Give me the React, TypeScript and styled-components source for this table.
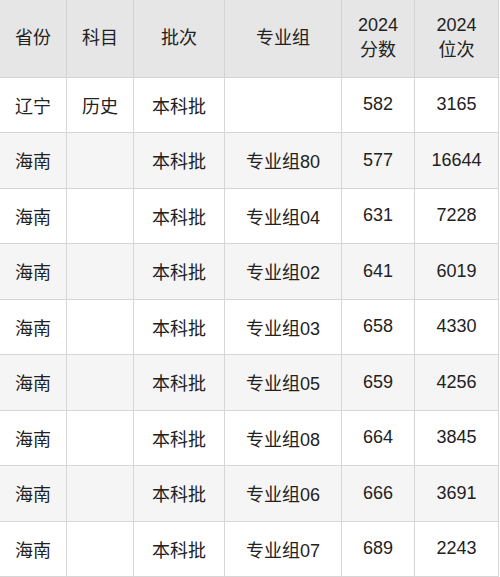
import React from 'react';
import styled, { createGlobalStyle } from 'styled-components';

const GlobalStyle = createGlobalStyle`
  html, body {
    margin: 0;
    padding: 0;
    background: #ffffff;
  }
`;

const rows = [
  { province: '辽宁', subject: '历史', batch: '本科批', group: '', score: '582', rank: '3165' },
  { province: '海南', subject: '', batch: '本科批', group: '专业组80', score: '577', rank: '16644' },
  { province: '海南', subject: '', batch: '本科批', group: '专业组04', score: '631', rank: '7228' },
  { province: '海南', subject: '', batch: '本科批', group: '专业组02', score: '641', rank: '6019' },
  { province: '海南', subject: '', batch: '本科批', group: '专业组03', score: '658', rank: '4330' },
  { province: '海南', subject: '', batch: '本科批', group: '专业组05', score: '659', rank: '4256' },
  { province: '海南', subject: '', batch: '本科批', group: '专业组08', score: '664', rank: '3845' },
  { province: '海南', subject: '', batch: '本科批', group: '专业组06', score: '666', rank: '3691' },
  { province: '海南', subject: '', batch: '本科批', group: '专业组07', score: '689', rank: '2243' },
];

const colWidths = [67, 67, 91, 117, 73, 84];

const App = () => {
  return (
    <>
      <GlobalStyle />
      <Wrapper>
        <Table>
          <colgroup>
            {colWidths.map((w, i) => (
              <col key={i} style={{ width: w }} />
            ))}
          </colgroup>
          <thead>
            <HeadRow>
              <HeadCell>省份</HeadCell>
              <HeadCell>科目</HeadCell>
              <HeadCell>批次</HeadCell>
              <HeadCell>专业组</HeadCell>
              <HeadCell>2024<br />分数</HeadCell>
              <HeadCell>2024<br />位次</HeadCell>
            </HeadRow>
          </thead>
          <tbody>
            {rows.map((r, i) => (
              <BodyRow key={i} $striped={i % 2 === 1}>
                <Cell>{r.province}</Cell>
                <Cell>{r.subject}</Cell>
                <Cell>{r.batch}</Cell>
                <Cell>{r.group}</Cell>
                <Cell>{r.score}</Cell>
                <Cell>{r.rank}</Cell>
              </BodyRow>
            ))}
          </tbody>
        </Table>
      </Wrapper>
    </>
  );
};

const Wrapper = styled.div`
  width: 500px;
  height: 577px;
  overflow: hidden;
`;

const Table = styled.table`
  width: 500px;
  margin-left: -1px;
  border-collapse: collapse;
  table-layout: fixed;
  font-family: "Liberation Sans", "Noto Sans CJK SC", sans-serif;
  font-size: 18px;
  color: #222222;
`;

const HeadRow = styled.tr`
  height: 77px;
  background-color: #e6e6e6;
`;

const HeadCell = styled.th`
  font-weight: 400;
  text-align: center;
  vertical-align: middle;
  line-height: 25px;
  padding: 0;
  border: 1px solid #d3d3d3;
  border-top: none;
`;

const BodyRow = styled.tr<{ $striped: boolean }>`
  height: 55.5px;
  background-color: ${(p) => (p.$striped ? '#f5f5f5' : '#ffffff')};
`;

const Cell = styled.td`
  text-align: center;
  vertical-align: middle;
  padding: 0;
  border: 1px solid #d6d6d6;
`;

export default App;
